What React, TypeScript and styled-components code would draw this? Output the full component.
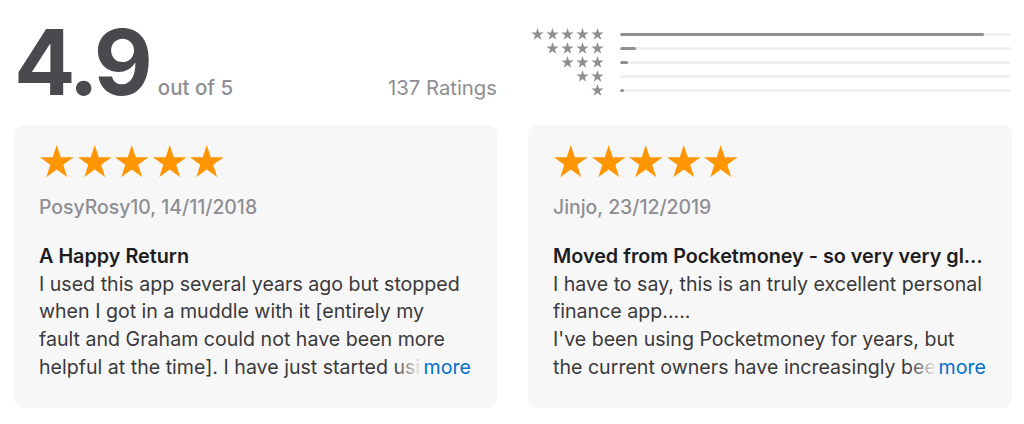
import React from "react";
import styled, { createGlobalStyle } from "styled-components";

const GlobalStyle = createGlobalStyle`
  body {
    margin: 0;
    background: #ffffff;
    font-family: Inter, "Liberation Sans", sans-serif;
    -webkit-font-smoothing: antialiased;
  }
`;

const STAR_POINTS =
  "12,0 14.7,8.29 23.41,8.29 16.36,13.42 19.05,21.71 12,16.59 4.95,21.71 7.64,13.42 0.59,8.29 9.3,8.29";

const Star = ({ size, color }: { size: number; color: string }) => (
  <svg width={size} height={size * 0.908} viewBox="0 0 24 21.8">
    <polygon points={STAR_POINTS} fill={color} />
  </svg>
);

const PageStyled = styled.div`
  width: 1024px;
  height: 424px;
  box-sizing: border-box;
  padding: 0 12px 0 14px;
  overflow: hidden;
`;

const HeaderStyled = styled.header`
  display: grid;
  grid-template-columns: 483px 484px;
  column-gap: 31px;
  height: 125px;
`;

const SummaryStyled = styled.div`
  display: flex;
  align-items: baseline;
  padding-top: 17px;
`;

const AverageStyled = styled.span`
  font-size: 91px;
  line-height: 91px;
  font-weight: 700;
  letter-spacing: -4px;
  color: #4a4a4e;
`;

const OutOfStyled = styled.span`
  margin-left: 9px;
  font-size: 20.5px;
  font-weight: 500;
  color: #8e8e93;
`;

const RatingsCountStyled = styled.span`
  margin-left: auto;
  font-size: 20.3px;
  font-weight: 400;
  color: #8e8e93;
`;

const HistogramStyled = styled.div`
  display: flex;
  flex-direction: column;
  padding-top: 27px;
`;

const HistogramRowStyled = styled.div`
  display: flex;
  align-items: center;
  height: 14px;
`;

const RowStarsStyled = styled.div`
  display: flex;
  justify-content: flex-end;
  gap: 2px;
  width: 76px;
  svg {
    display: block;
  }
`;

const TrackStyled = styled.div`
  flex: 1;
  height: 3px;
  margin-left: 16px;
  margin-right: 1px;
  border-radius: 2px;
  background: #efeff4;
  overflow: hidden;
`;

const FillStyled = styled.div`
  height: 100%;
  border-radius: 2px;
  background: #8e8e93;
`;

const CardsStyled = styled.div`
  display: grid;
  grid-template-columns: 483px 484px;
  column-gap: 31px;
`;

const CardStyled = styled.article`
  height: 283px;
  box-sizing: border-box;
  padding: 20px 26px 0 25px;
  border-radius: 9px;
  background: #f7f7f7;
`;

const CardStarsStyled = styled.div`
  display: flex;
  gap: 2px;
  height: 36px;
  svg {
    display: block;
  }
`;

const ReviewerStyled = styled.div`
  margin-top: 14px;
  font-size: 19.4px;
  line-height: 24px;
  font-weight: 500;
  color: #8e8e93;
`;

const TitleStyled = styled.h3`
  margin: 24px 0 0;
  font-size: 19.8px;
  line-height: 27.7px;
  font-weight: 600;
  color: #1d1d1f;
  white-space: nowrap;
  overflow: hidden;
  text-overflow: ellipsis;
`;

const BodyStyled = styled.div`
  position: relative;
  height: 110.8px;
  overflow: hidden;
`;

const BodyTextStyled = styled.p`
  margin: 0;
  font-size: 19.6px;
  line-height: 27.7px;
  color: #3a3a3c;
  white-space: pre-line;
`;

const MoreStyled = styled.a`
  position: absolute;
  right: 0;
  bottom: 0;
  padding-left: 30px;
  font-size: 19.6px;
  line-height: 27.7px;
  color: #0070c9;
  text-decoration: none;
  background: linear-gradient(to right, rgba(247, 247, 247, 0), #f7f7f7 28px);
`;

const histogram = [93, 4, 2, 0, 1];

const reviews = [
  {
    author: "PosyRosy10, 14/11/2018",
    title: "A Happy Return",
    body:
      "I used this app several years ago but stopped\nwhen I got in a muddle with it [entirely my\nfault and Graham could not have been more\nhelpful at the time]. I have just started using it again and am delighted.",
  },
  {
    author: "Jinjo, 23/12/2019",
    title: "Moved from Pocketmoney - so very very glad I did",
    body:
      "I have to say, this is an truly excellent personal\nfinance app.....\nI've been using Pocketmoney for years, but\nthe current owners have increasingly been letting it slide.",
  },
];

export default function App() {
  return (
    <PageStyled>
      <GlobalStyle />
      <HeaderStyled>
        <SummaryStyled>
          <AverageStyled>4.9</AverageStyled>
          <OutOfStyled>out of 5</OutOfStyled>
          <RatingsCountStyled>137 Ratings</RatingsCountStyled>
        </SummaryStyled>
        <HistogramStyled>
          {histogram.map((percent, index) => (
            <HistogramRowStyled key={index}>
              <RowStarsStyled>
                {Array.from({ length: 5 - index }).map((_, i) => (
                  <Star key={i} size={13} color="#8e8e93" />
                ))}
              </RowStarsStyled>
              <TrackStyled>
                <FillStyled style={{ width: `${percent}%` }} />
              </TrackStyled>
            </HistogramRowStyled>
          ))}
        </HistogramStyled>
      </HeaderStyled>
      <CardsStyled>
        {reviews.map((review) => (
          <CardStyled key={review.author}>
            <CardStarsStyled>
              {Array.from({ length: 5 }).map((_, i) => (
                <Star key={i} size={35.5} color="#ff9500" />
              ))}
            </CardStarsStyled>
            <ReviewerStyled>{review.author}</ReviewerStyled>
            <TitleStyled>{review.title}</TitleStyled>
            <BodyStyled>
              <BodyTextStyled>{review.body}</BodyTextStyled>
              <MoreStyled href="#">more</MoreStyled>
            </BodyStyled>
          </CardStyled>
        ))}
      </CardsStyled>
    </PageStyled>
  );
}
